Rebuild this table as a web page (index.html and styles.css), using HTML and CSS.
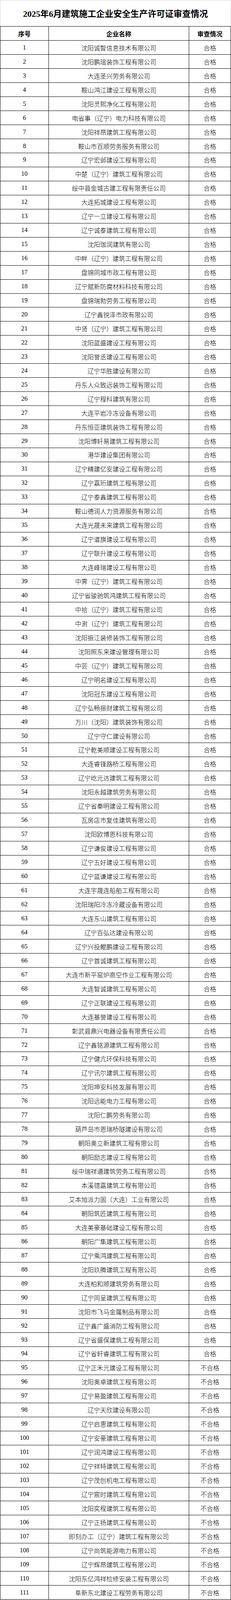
FILE: index.html
```html
<!DOCTYPE html>
<html lang="zh-CN">
<head>
<meta charset="utf-8">
<title>2025年6月建筑施工企业安全生产许可证审查情况</title>
<link rel="stylesheet" href="styles.css">
</head>
<body>
<div class="sheet">
  <div class="title">2025年6月建筑施工企业安全生产许可证审查情况</div>
  <table class="list">
    <thead>
      <tr><th>序号</th><th>企业名称</th><th>审查情况</th></tr>
    </thead>
    <tbody>
      <tr><td class="no">1</td><td>沈阳诚智信息技术有限公司</td><td>合格</td></tr>
      <tr><td class="no">2</td><td>沈阳鹏瑄装饰工程有限公司</td><td>合格</td></tr>
      <tr><td class="no">3</td><td>大连圣兴劳务有限公司</td><td>合格</td></tr>
      <tr><td class="no">4</td><td>鞍山鸿江建设工程有限公司</td><td>合格</td></tr>
      <tr><td class="no">5</td><td>沈阳灵熙净化工程有限公司</td><td>合格</td></tr>
      <tr><td class="no">6</td><td>电省事（辽宁）电力科技有限公司</td><td>合格</td></tr>
      <tr><td class="no">7</td><td>沈阳祥昂建筑工程有限公司</td><td>合格</td></tr>
      <tr><td class="no">8</td><td>鞍山市百顺劳务服务有限公司</td><td>合格</td></tr>
      <tr><td class="no">9</td><td>辽宁宏邺建设工程有限公司</td><td>合格</td></tr>
      <tr><td class="no">10</td><td>中楚（辽宁）建筑工程有限公司</td><td>合格</td></tr>
      <tr><td class="no">11</td><td>绥中县金城古建工程有限责任公司</td><td>合格</td></tr>
      <tr><td class="no">12</td><td>大连拓城建设工程有限公司</td><td>合格</td></tr>
      <tr><td class="no">13</td><td>辽宁一立建设工程有限公司</td><td>合格</td></tr>
      <tr><td class="no">14</td><td>辽宁诚泰建筑工程有限公司</td><td>合格</td></tr>
      <tr><td class="no">15</td><td>沈阳珈润建筑有限公司</td><td>合格</td></tr>
      <tr><td class="no">16</td><td>中畔（辽宁）建筑工程有限公司</td><td>合格</td></tr>
      <tr><td class="no">17</td><td>盘锦同城市政工程有限公司</td><td>合格</td></tr>
      <tr><td class="no">18</td><td>辽宁赋新防腐材料科技有限公司</td><td>合格</td></tr>
      <tr><td class="no">19</td><td>盘锦瑞勃劳务工程有限公司</td><td>合格</td></tr>
      <tr><td class="no">20</td><td>辽宁鑫锐泽市政有限公司</td><td>合格</td></tr>
      <tr><td class="no">21</td><td>中贤（辽宁）建筑工程有限公司</td><td>合格</td></tr>
      <tr><td class="no">22</td><td>沈阳蓝盛建设工程有限公司</td><td>合格</td></tr>
      <tr><td class="no">23</td><td>沈阳誉丞建设工程有限公司</td><td>合格</td></tr>
      <tr><td class="no">24</td><td>辽宁华胜建设有限公司</td><td>合格</td></tr>
      <tr><td class="no">25</td><td>丹东人众致远装饰工程有限公司</td><td>合格</td></tr>
      <tr><td class="no">26</td><td>辽宁程科建筑有限公司</td><td>合格</td></tr>
      <tr><td class="no">27</td><td>大连平岩冷冻设备有限公司</td><td>合格</td></tr>
      <tr><td class="no">28</td><td>丹东恒亚建筑装饰工程有限公司</td><td>合格</td></tr>
      <tr><td class="no">29</td><td>沈阳博轩易建筑工程有限公司</td><td>合格</td></tr>
      <tr><td class="no">30</td><td>港华建设集团有限公司</td><td>合格</td></tr>
      <tr><td class="no">31</td><td>辽宁精建亿安建设工程有限公司</td><td>合格</td></tr>
      <tr><td class="no">32</td><td>辽宁嘉珩建筑工程有限公司</td><td>合格</td></tr>
      <tr><td class="no">33</td><td>辽宁泰鑫建筑工程有限公司</td><td>合格</td></tr>
      <tr><td class="no">34</td><td>鞍山德润人力资源服务有限公司</td><td>合格</td></tr>
      <tr><td class="no">35</td><td>大连光晟未来建筑工程有限公司</td><td>合格</td></tr>
      <tr><td class="no">36</td><td>辽宁道旗建设工程有限公司</td><td>合格</td></tr>
      <tr><td class="no">37</td><td>辽宁联升建设工程有限公司</td><td>合格</td></tr>
      <tr><td class="no">38</td><td>大连峰瑞建设工程有限公司</td><td>合格</td></tr>
      <tr><td class="no">39</td><td>中霁（辽宁）建筑工程有限公司</td><td>合格</td></tr>
      <tr><td class="no">40</td><td>辽宁省骏驰筑鸿建筑工程有限公司</td><td>合格</td></tr>
      <tr><td class="no">41</td><td>中拾（辽宁）建筑工程有限公司</td><td>合格</td></tr>
      <tr><td class="no">42</td><td>中澍（辽宁）建筑工程有限公司</td><td>合格</td></tr>
      <tr><td class="no">43</td><td>沈阳振江装修装饰工程有限公司</td><td>合格</td></tr>
      <tr><td class="no">44</td><td>沈阳照东来建设管理有限公司</td><td>合格</td></tr>
      <tr><td class="no">45</td><td>中芸（辽宁）建筑工程有限公司</td><td>合格</td></tr>
      <tr><td class="no">46</td><td>辽宁明名建设工程有限公司</td><td>合格</td></tr>
      <tr><td class="no">47</td><td>沈阳冠东建设工程有限公司</td><td>合格</td></tr>
      <tr><td class="no">48</td><td>辽宁弘畅振财建筑工程有限公司</td><td>合格</td></tr>
      <tr><td class="no">49</td><td>万川（沈阳）建筑装饰有限公司</td><td>合格</td></tr>
      <tr><td class="no">50</td><td>辽宁守仁建设有限公司</td><td>合格</td></tr>
      <tr><td class="no">51</td><td>辽宁乾美顺建设工程有限公司</td><td>合格</td></tr>
      <tr><td class="no">52</td><td>大连睿锋路桥工程有限公司</td><td>合格</td></tr>
      <tr><td class="no">53</td><td>辽宁屹元达建筑工程有限公司</td><td>合格</td></tr>
      <tr><td class="no">54</td><td>沈阳永越建筑劳务有限公司</td><td>合格</td></tr>
      <tr><td class="no">55</td><td>辽宁省秦明建设工程有限公司</td><td>合格</td></tr>
      <tr><td class="no">56</td><td>瓦房店市复佳建筑有限公司</td><td>合格</td></tr>
      <tr><td class="no">57</td><td>沈阳欧博恩科技有限公司</td><td>合格</td></tr>
      <tr><td class="no">58</td><td>辽宁谦俊建设工程有限公司</td><td>合格</td></tr>
      <tr><td class="no">59</td><td>辽宁五好建设工程有限公司</td><td>合格</td></tr>
      <tr><td class="no">60</td><td>辽宁蓝谦建设工程有限公司</td><td>合格</td></tr>
      <tr><td class="no">61</td><td>大连宇晟连船舶工程有限公司</td><td>合格</td></tr>
      <tr><td class="no">62</td><td>沈阳瑞阳冷冻冷藏设备有限公司</td><td>合格</td></tr>
      <tr><td class="no">63</td><td>大连东山建筑工程有限公司</td><td>合格</td></tr>
      <tr><td class="no">64</td><td>辽宁百弘达建设有限公司</td><td>合格</td></tr>
      <tr><td class="no">65</td><td>辽宁兴投鲲鹏建设工程有限公司</td><td>合格</td></tr>
      <tr><td class="no">66</td><td>辽宁首诚建筑工程有限公司</td><td>合格</td></tr>
      <tr><td class="no">67</td><td>大连市新平窑炉高空作业工程有限公司</td><td>合格</td></tr>
      <tr><td class="no">68</td><td>大连智诚建筑工程有限公司</td><td>合格</td></tr>
      <tr><td class="no">69</td><td>辽宁正联建设工程有限公司</td><td>合格</td></tr>
      <tr><td class="no">70</td><td>大连基誉建设工程有限公司</td><td>合格</td></tr>
      <tr><td class="no">71</td><td>彰武县鼎兴电器设备有限责任公司</td><td>合格</td></tr>
      <tr><td class="no">72</td><td>辽宁鑫铭源建筑工程有限公司</td><td>合格</td></tr>
      <tr><td class="no">73</td><td>辽宁健亢环保科技有限公司</td><td>合格</td></tr>
      <tr><td class="no">74</td><td>辽宁讯尔建筑工程有限公司</td><td>合格</td></tr>
      <tr><td class="no">75</td><td>沈阳坤安科技发展有限公司</td><td>合格</td></tr>
      <tr><td class="no">76</td><td>沈阳远能电力工程有限公司</td><td>合格</td></tr>
      <tr><td class="no">77</td><td>沈阳仁鹏劳务有限公司</td><td>合格</td></tr>
      <tr><td class="no">78</td><td>葫芦岛市恩瑞桥隧建设有限公司</td><td>合格</td></tr>
      <tr><td class="no">79</td><td>朝阳奥立新建筑工程有限公司</td><td>合格</td></tr>
      <tr><td class="no">80</td><td>朝阳励志建设工程有限公司</td><td>合格</td></tr>
      <tr><td class="no">81</td><td>绥中瑞祥通建筑劳务工程有限公司</td><td>合格</td></tr>
      <tr><td class="no">82</td><td>本溪镱嘉建筑工程有限公司</td><td>合格</td></tr>
      <tr><td class="no">83</td><td>艾本旭派力固（大连）工业有限公司</td><td>合格</td></tr>
      <tr><td class="no">84</td><td>朝阳筑匠建筑工程有限公司</td><td>合格</td></tr>
      <tr><td class="no">85</td><td>大连美豪基础建设工程有限公司</td><td>合格</td></tr>
      <tr><td class="no">86</td><td>朝阳广集建筑工程有限公司</td><td>合格</td></tr>
      <tr><td class="no">87</td><td>辽宁乘鸿建筑工程有限公司</td><td>合格</td></tr>
      <tr><td class="no">88</td><td>沈阳玖腾建筑工程有限公司</td><td>合格</td></tr>
      <tr><td class="no">89</td><td>大连柏和顺建筑劳务有限公司</td><td>合格</td></tr>
      <tr><td class="no">90</td><td>辽宁同呈建筑工程有限公司</td><td>合格</td></tr>
      <tr><td class="no">91</td><td>沈阳市飞马金属制品有限公司</td><td>合格</td></tr>
      <tr><td class="no">92</td><td>辽宁鑫广盛消防工程有限公司</td><td>合格</td></tr>
      <tr><td class="no">93</td><td>辽宁省盛保建筑工程有限公司</td><td>合格</td></tr>
      <tr><td class="no">94</td><td>辽宁省轩睿建筑工程有限公司</td><td>合格</td></tr>
      <tr><td class="no">95</td><td>辽宁正禾元建设工程有限公司</td><td>不合格</td></tr>
      <tr><td class="no">96</td><td>沈阳奥卓建筑工程有限公司</td><td>不合格</td></tr>
      <tr><td class="no">97</td><td>辽宁易盈建筑工程有限公司</td><td>不合格</td></tr>
      <tr><td class="no">98</td><td>辽宁天欣建设有限公司</td><td>不合格</td></tr>
      <tr><td class="no">99</td><td>辽宁启惠建筑工程有限公司</td><td>不合格</td></tr>
      <tr><td class="no">100</td><td>辽宁安豪建筑工程有限公司</td><td>不合格</td></tr>
      <tr><td class="no">101</td><td>辽宁润鸿建设工程有限公司</td><td>不合格</td></tr>
      <tr><td class="no">102</td><td>辽宁祥特建筑工程有限公司</td><td>不合格</td></tr>
      <tr><td class="no">103</td><td>辽宁茂创机电工程有限公司</td><td>不合格</td></tr>
      <tr><td class="no">104</td><td>辽宁宸时建筑工程有限公司</td><td>不合格</td></tr>
      <tr><td class="no">105</td><td>沈阳奕程建筑工程有限公司</td><td>不合格</td></tr>
      <tr><td class="no">106</td><td>辽宁正扬建筑工程有限公司</td><td>不合格</td></tr>
      <tr><td class="no">107</td><td>即刻办工（辽宁）建筑工程有限公司</td><td>不合格</td></tr>
      <tr><td class="no">108</td><td>辽宁尚筑能源电力有限公司</td><td>不合格</td></tr>
      <tr><td class="no">109</td><td>辽宁辉昂建筑工程有限公司</td><td>不合格</td></tr>
      <tr><td class="no">110</td><td>沈阳东亿鸿祥检修安装工程有限公司</td><td>不合格</td></tr>
      <tr><td class="no">111</td><td>阜新东北建设工程劳务有限公司</td><td>不合格</td></tr>
    </tbody>
  </table>
</div>
</body>
</html>
```

FILE: styles.css
```css
/* horizontal unit: 1/591 of the window width; vertical unit: 1/4557 of the window height */
:root {
  --u: calc(100vw / 591);
  --v: calc(100vh / 4557);
}

html, body {
  margin: 0;
  padding: 0;
  background: #ffffff;
}

body {
  font-family: "Noto Sans CJK SC", "Noto Sans", sans-serif;
  color: #000000;
}

.sheet {
  width: calc(var(--u) * 591);
}

.title {
  box-sizing: border-box;
  height: calc(var(--v) * 75);
  border: 1px solid #d4d4d4;
  border-bottom: none;
  display: flex;
  align-items: center;
  justify-content: center;
  padding-top: calc(var(--v) * 5);
  font-family: "Liberation Serif", "Noto Sans CJK SC", serif;
  font-weight: 700;
  font-size: calc(var(--u) * 22);
  line-height: calc(var(--u) * 28);
  white-space: nowrap;
}

/* table drawn with grid rows so the row pitch is exact */
.list {
  display: block;
  width: calc(var(--u) * 591);
  box-sizing: border-box;
  border-collapse: separate;
  border-spacing: 0;
  border-top: 1px solid #000000;
  border-left: 1px solid #000000;
}

.list thead,
.list tbody {
  display: block;
}

.list tr {
  display: grid;
  grid-template-columns: calc(var(--u) * 124) calc(var(--u) * 359) 1fr;
  height: calc(var(--v) * 40);
}

.list th,
.list td {
  box-sizing: border-box;
  display: flex;
  align-items: center;
  justify-content: center;
  height: calc(var(--v) * 40);
  padding: 0;
  border-right: 1px solid #000000;
  border-bottom: 1px solid #000000;
  font-size: calc(var(--u) * 16);
  line-height: calc(var(--u) * 20);
  white-space: nowrap;
  overflow: visible;
}

.list th {
  font-weight: 700;
}

.list td {
  font-weight: 300;
}

.list td.no {
  font-family: "Liberation Serif", serif;
  font-size: calc(var(--u) * 16);
  font-weight: 400;
}
```
